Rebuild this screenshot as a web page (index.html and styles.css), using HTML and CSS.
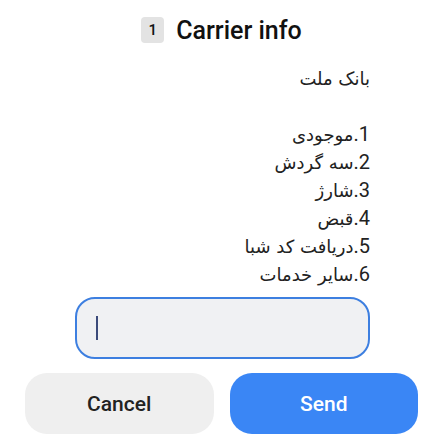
FILE: index.html
```html
<!DOCTYPE html>
<html>
<head>
<meta charset="utf-8">
<link rel="stylesheet" href="styles.css">
</head>
<body>
<div class="dialog">
  <div class="title">
    <span class="badge">1</span>
    <span class="title-text">Carrier info</span>
  </div>
  <div class="message" dir="rtl">
    <div class="line">بانک ملت</div>
    <div class="line blank">&nbsp;</div>
    <div class="line"><span class="num">1.</span>موجودی</div>
    <div class="line"><span class="num">2.</span>سه گردش</div>
    <div class="line"><span class="num">3.</span>شارژ</div>
    <div class="line"><span class="num">4.</span>قبض</div>
    <div class="line"><span class="num">5.</span>دریافت کد شبا</div>
    <div class="line"><span class="num">6.</span>سایر خدمات</div>
  </div>
  <div class="input-wrap">
    <div class="input"><span class="cursor"></span></div>
  </div>
  <div class="buttons">
    <div class="btn cancel">Cancel</div>
    <div class="btn send">Send</div>
  </div>
</div>
</body>
</html>
```
FILE: styles.css
```css
html, body {
  margin: 0;
  padding: 0;
  background: #ffffff;
}
body {
  width: 442px;
  height: 440px;
  overflow: hidden;
  font-family: Roboto, "Noto Sans", "DejaVu Sans", sans-serif;
}
.dialog {
  display: flex;
  flex-direction: column;
  padding: 17px 24px 0 25px;
}
.title {
  display: flex;
  align-items: center;
  justify-content: center;
  gap: 12px;
  height: 26px;
}
.badge {
  width: 23px;
  height: 26px;
  background: #e3e3e3;
  border-radius: 4px;
  font-size: 15px;
  font-weight: 500;
  color: #111;
  display: flex;
  align-items: center;
  justify-content: center;
}
.title-text {
  font-size: 25px;
  font-weight: 500;
  color: #111;
}
.message {
  margin-top: 22px;
  padding-right: 48px;
  font-family: "DejaVu Sans", "Noto Sans", sans-serif;
  font-size: 18px;
  line-height: 28px;
  color: #222;
  text-align: right;
}
.line {
  height: 28px;
}
.num {
  font-family: Roboto, sans-serif;
  font-size: 20px;
  line-height: 20px;
}
.input-wrap {
  margin-top: 8px;
  padding: 0 48px 0 50px;
}
.input {
  height: 58px;
  border: 2px solid #3d7fe0;
  border-radius: 20px;
  background: #f0f1f3;
  display: flex;
  align-items: center;
  padding-left: 19px;
}
.cursor {
  width: 2px;
  height: 24px;
  background: #3b4a7a;
}
.buttons {
  margin-top: 14px;
  display: flex;
  gap: 16px;
}
.btn {
  flex: 1;
  height: 61px;
  border-radius: 22px;
  display: flex;
  align-items: center;
  justify-content: center;
  font-size: 21px;
  font-weight: 500;
}
.cancel {
  background: #efefef;
  color: #222;
}
.send {
  background: #3a86f5;
  color: #ffffff;
}
```
